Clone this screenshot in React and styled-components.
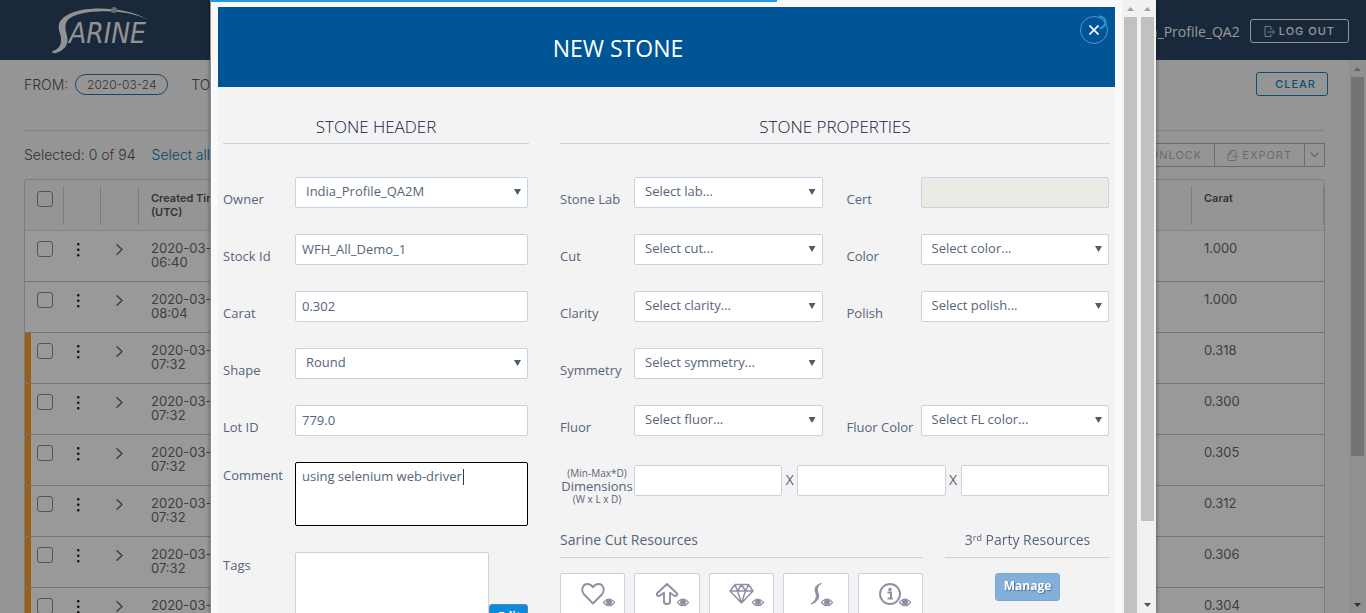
import React, { useId } from "react";
import styled, { createGlobalStyle } from "styled-components";

const GlobalStyle = createGlobalStyle`
  *, *::before, *::after { box-sizing: border-box; }
  html, body, #root { height: 100%; }
  body { margin: 0; overflow: hidden; background: #f9f9f9; }
  button, input, select, textarea { font: inherit; color: inherit; margin: 0; }
`;

const pageFont = `Inter, "Liberation Sans", sans-serif`;
const formFont = `"Open Sans", "Noto Sans", sans-serif`;

/* ---------- page behind the dialog ---------- */

const Page = styled.div`
  height: 100%;
  display: flex;
  flex-direction: column;
  font-family: ${pageFont};
  font-weight: 300;
  color: #565656;
`;

const TopBar = styled.header`
  flex: none;
  height: 60px;
  padding: 0 17px 0 48px;
  display: flex;
  align-items: center;
  justify-content: space-between;
  background: #2a4462;
  color: #fafafa;
`;

const Account = styled.div`
  display: flex;
  align-items: center;
  gap: 10px;
  padding-top: 2px;
  font-weight: 400;
`;

const UserName = styled.span`
  font-family: ${formFont};
  font-size: 14px;
`;

const OutlineButton = styled.button`
  display: inline-flex;
  align-items: center;
  justify-content: center;
  gap: 4px;
  height: 24px;
  padding: ${(p) => p.$pad || "0 12px"};
  border: 1px solid ${(p) => p.$tone};
  border-radius: 3px;
  background: transparent;
  color: ${(p) => p.$tone};
  font-size: 11px;
  font-weight: ${(p) => p.$weight || 500};
  letter-spacing: 1px;
  white-space: nowrap;
`;

const Scroller = styled.div`
  flex: 1;
  min-height: 0;
  display: flex;
`;

const Main = styled.main`
  flex: 1;
  min-width: 0;
  overflow: hidden;
  padding: 12px 24px 0;
`;

const FilterBar = styled.div`
  display: flex;
  align-items: flex-start;
  height: 59px;
  margin-right: 1px;
  border-bottom: 1px solid #dcdcdc;
  font-size: 14px;
`;

const DateField = styled.label`
  display: flex;
  align-items: center;
  gap: 7px;
  height: 24px;
  margin-right: 23px;
`;

const DatePill = styled.input`
  width: 93px;
  height: 21px;
  padding: 0;
  border: 1px solid #2b6fa8;
  border-radius: 11px;
  background: transparent;
  text-align: center;
  font-size: 12px;
`;

const ClearSlot = styled.div`
  margin: 0 -4px 0 auto;
`;

const ListBar = styled.div`
  display: flex;
  align-items: center;
  justify-content: space-between;
  height: 48px;
  font-size: 14px;
`;

const Picked = styled.div`
  display: flex;
  gap: 16px;
  padding-bottom: 2px;
  a { color: #0b78b0; text-decoration: none; }
`;

const ToolGroup = styled.div`
  display: flex;
  button {
    border-radius: 0;
    margin-left: -1px;
  }
`;

const Grid = styled.table`
  width: 100%;
  table-layout: fixed;
  border-collapse: separate;
  border-spacing: 0;
  border: 1px solid #d0d0d0;
  border-radius: 3px 3px 0 0;
  font-size: 13px;
  line-height: 14px;
`;

const HeadCell = styled.th`
  height: 51px;
  padding: 6px 0 5px;
  vertical-align: top;
  text-align: left;
  border-bottom: 1px solid #dcdcdc;
  font-size: 11px;
  font-weight: 600;
`;

const HeadInner = styled.div`
  height: 39px;
  padding: 5px 0 0 12px;
  border-right: 1px solid #d0d0d0;
`;

const Cell = styled.td`
  height: 51px;
  padding: 10px 0 0 ${(p) => p.$indent || 12}px;
  vertical-align: top;
  background: #ffffff;
  border-bottom: 1px solid #c4c4c4;
  box-shadow: ${(p) => (p.$flag ? "inset 6px 0 #ff9d28" : "none")};
  font-weight: 400;
  color: #6a6a6a;
`;

const Tick = styled.input`
  appearance: none;
  display: block;
  width: 16px;
  height: 16px;
  border: 1px solid #8c8c8c;
  border-radius: 3px;
`;

const IconButton = styled.button`
  display: flex;
  align-items: center;
  height: 16px;
  padding: 0;
  border: 0;
  background: transparent;
`;

/* ---------- scroll bars ---------- */

const Track = styled.div`
  flex: none;
  width: 17px;
  display: flex;
  flex-direction: column;
  align-items: center;
  justify-content: space-between;
  background: #f1f1f1;
`;

const Arrow = styled.span`
  flex: none;
  width: 7px;
  height: 4px;
  margin: 7px 0 6px;
  background: ${(p) => (p.$down ? "#505050" : "#a3a3a3")};
  clip-path: ${(p) =>
    p.$down ? "polygon(0 0, 100% 0, 50% 100%)" : "polygon(50% 0, 100% 100%, 0 100%)"};
`;

const Lane = styled.div`
  flex: 1;
  width: 13px;
`;

const Thumb = styled.div`
  height: ${(p) => p.$size};
  background: #c1c1c1;
`;

function ScrollBar({ size, down = true }) {
  return (
    <Track aria-hidden="true">
      <Arrow />
      <Lane>
        <Thumb $size={size} />
      </Lane>
      {down && <Arrow $down />}
    </Track>
  );
}

/* ---------- dialog ---------- */

const Backdrop = styled.div`
  position: fixed;
  inset: 0;
  display: flex;
  justify-content: center;
  padding: 0 210px;
  background: rgba(0, 0, 0, 0.4);
`;

const Dialog = styled.section`
  flex: 1;
  min-width: 0;
  display: flex;
  overflow: hidden;
  border-left: 1px solid #8f8f8f;
  background: #f9f9f9;
  box-shadow: 0 0 4px rgba(0, 0, 0, 0.5);
  font-family: ${formFont};
  font-size: 13px;
  line-height: 18px;
  color: #566579;
`;

const Progress = styled.div`
  position: absolute;
  top: 0;
  left: 211px;
  right: 211px;
  height: 2px;
  &::before {
    content: "";
    display: block;
    width: 60%;
    height: 2px;
    background: #2199e0;
  }
`;

const Sheet = styled.div`
  flex: 1;
  min-width: 0;
  margin: 7px 7px 0;
  background: #f3f3f3;
`;

const TitleBar = styled.header`
  display: grid;
  grid-template-columns: 1fr 97px;
  height: 80px;
  background: #005596;
  color: #ffffff;
`;

const Title = styled.h1`
  margin: 0;
  padding-top: 2px;
  align-self: center;
  text-align: center;
  font-size: 23px;
  line-height: 30px;
  font-weight: 400;
`;

const CloseButton = styled.button`
  position: relative;
  justify-self: end;
  display: flex;
  align-items: center;
  justify-content: center;
  width: 28px;
  height: 28px;
  margin: 9px 7px 0 0;
  padding: 0;
  border: 1px solid #5c93c0;
  border-radius: 50%;
  background: transparent;
`;

const Spinner = styled.svg`
  position: absolute;
  top: -2px;
  right: 0;
`;

const Columns = styled.div`
  display: grid;
  grid-template-columns: 306fr 550fr;
  gap: 31px;
  padding: 27px 5px 0;
`;

const Heading = styled.h2`
  margin: 0 0 33px;
  padding-bottom: 4px;
  border-bottom: 1px solid #c6d3e0;
  text-align: center;
  font-size: 17px;
  line-height: 25px;
  font-weight: 300;
  color: #14183f;
`;

const Fields = styled.div`
  display: grid;
  grid-template-columns: ${(p) => (p.$pair ? "1fr 1fr" : "1fr")};
  gap: 26px 24px;
  padding-right: 1px;
`;

const Field = styled.div`
  display: grid;
  grid-template-columns: ${(p) => p.$label || 74}px 1fr;
  grid-column: ${(p) => (p.$wide ? "1 / -1" : "auto")};
`;

const Label = styled.label`
  padding-top: ${(p) => (p.$top ? 5 : 14)}px;
  line-height: 17px;
  white-space: nowrap;
`;

const TextBox = styled.input`
  width: 100%;
  min-width: 0;
  height: 31px;
  padding: 0 6px 2px;
  border: 1px solid #c6d3e0;
  border-radius: 2px;
  outline: 0;
  background: ${(p) => (p.disabled ? "#ebebe4" : "#ffffff")};
`;

const SelectWrap = styled.div`
  display: grid;
  align-items: center;
  & > * { grid-area: 1 / 1; }
  &::after {
    content: "";
    grid-area: 1 / 1;
    justify-self: end;
    width: 7px;
    height: 6px;
    margin: 0 7px 1px 0;
    background: #4c5b6f;
    clip-path: polygon(0 0, 100% 0, 50% 100%);
    pointer-events: none;
  }
`;

const Picker = styled.select`
  appearance: none;
  width: 100%;
  height: 31px;
  padding: 0 18px 4px 10px;
  border: 1px solid #c6d3e0;
  border-radius: 2px;
  background: #ffffff;
`;

const CommentWrap = styled.div`
  position: relative;
`;

const Caret = styled.span`
  position: absolute;
  top: 7px;
  left: 168px;
  width: 1px;
  height: 16px;
  background: #2c3a4c;
`;

const Comment = styled.textarea`
  display: block;
  width: 100%;
  height: 64px;
  padding: 4px 6px;
  border: 1px solid #000000;
  border-radius: 2px;
  outline: 0;
  resize: none;
  background: #ffffff;
`;

const TagRow = styled.div`
  display: grid;
  grid-template-columns: 1fr 39px;
  align-items: end;
`;

const TagBox = styled(Comment)`
  height: 80px;
  border-color: #c6d3e0;
`;

const SolidButton = styled.button`
  height: 28px;
  padding: 0 8px 2px;
  border: 1px solid ${(p) => (p.$pale ? "#7aa6d0" : "#5d86a8")};
  border-radius: 3px;
  background: ${(p) => (p.$pale ? "#82b0d9" : "#0b8bdd")};
  color: #ffffff;
  font-size: 12px;
  line-height: 16px;
  font-weight: 700;
  text-shadow: 1px 1px 1px rgba(0, 0, 0, 0.35);
`;

const DimLabel = styled.div`
  padding-top: 2px;
  text-align: center;
  line-height: 14px;
  white-space: nowrap;
  small {
    display: block;
    font-size: 10px;
    line-height: 12px;
  }
`;

const DimRow = styled.div`
  display: grid;
  grid-template-columns: 1fr 15px 1fr 15px 1fr;
  align-items: center;
  height: 31px;
  text-align: center;
`;

const Times = styled.span`
  padding-bottom: 2px;
  font-size: 14px;
`;

const DimField = styled(Field)`
  margin-top: 3px;
`;

const Resources = styled.div`
  display: grid;
  grid-template-columns: 363fr 165fr;
  gap: 22px;
  margin-top: 24px;
`;

const SubHeading = styled.h3`
  margin: 0 0 15px;
  padding-bottom: 6px;
  border-bottom: 1px solid #c6d3e0;
  text-align: ${(p) => (p.$center ? "center" : "left")};
  font-size: 14px;
  line-height: 22px;
  font-weight: 400;
  sup { font-size: 9px; line-height: 0; vertical-align: 4px; }
`;

const Tiles = styled.div`
  display: grid;
  grid-template-columns: repeat(5, 1fr);
  gap: 9px;
`;

const Tile = styled.button`
  height: 64px;
  padding: 8px 0 0 12px;
  border: 1px solid #c6d3e0;
  border-radius: 2px;
  background: #ffffff;
  color: #8d90a5;
  display: flex;
  justify-content: center;
  align-items: flex-start;
`;

const Centered = styled.div`
  display: flex;
  justify-content: center;
`;

/* ---------- drawings ---------- */

function Logo() {
  return (
    <svg width="104" height="50" viewBox="48 5 104 50" role="img" aria-label="Sarine">
      <path
        d="M149 20 C134 11 114 8 96 8.500 C77 9 62 15 59 24 C57.500 31 62 35 61 42 C60 47 57 50 52.500 51 C51.500 53 53 53.500 56 53 C63 51 67.500 46 67.500 40 C67.500 34 64 29 66 23 C69 15.500 82 12 98 11.500 C117 10.500 133 13 149 20Z"
        fill="#f4f4f4"
      />
      <circle cx="114" cy="10" r="3" fill="#b4b4b4" />
      <text
        x="69"
        y="43"
        fill="#f4f4f4"
        fontFamily="'Liberation Sans Narrow', 'DejaVu Sans Condensed', sans-serif"
        fontStyle="italic"
        fontWeight="400"
        fontSize="28"
      >
        ARINE
      </text>
    </svg>
  );
}

const line = { fill: "none", stroke: "currentColor", strokeLinecap: "round", strokeLinejoin: "round" };

function DoorIcon() {
  return (
    <svg width="11" height="11" viewBox="0 0 11 11" {...line} strokeWidth="1" opacity="0.75">
      <path d="M7 3.5V1L6.5.5H1v10h6V8.5M4 6h6.3M8.5 4.2L10.4 6 8.5 7.8" />
    </svg>
  );
}

function ExportIcon() {
  return (
    <svg width="11" height="11" viewBox="0 0 11 11" {...line} strokeWidth="1">
      <path d="M1 4v5.5q0 1 1 1h6q1 0 1-1V9M1 4L4 .5h4q1 0 1 1v2M1 4h3V.5M5 6.3h5.3M8.6 4.5l1.8 1.8-1.8 1.8" />
    </svg>
  );
}

function Dots() {
  return (
    <svg width="4" height="16" viewBox="0 0 4 16" fill="#222222">
      <rect x="1" y="2" width="2.5" height="2.5" rx="1" />
      <rect x="1" y="7.5" width="2.5" height="2.5" rx="1" />
      <rect x="1" y="13" width="2.5" height="2.5" rx="1" />
    </svg>
  );
}

function Chevron({ down }) {
  return (
    <svg width={down ? 9 : 7} height={down ? 6 : 11} viewBox={down ? "0 0 9 6" : "0 0 7 11"} {...line} strokeWidth="1.5">
      <path d={down ? "M1 1l3.5 3.5L8 1" : "M1 .8l5 4.7-5 4.7"} />
    </svg>
  );
}

const shapes = {
  heart: (
    <path
      d="M12 21.500L2.700 12C0 8.500 1.300 2 6.500 2c2.800 0 4.400 1.500 5.500 3.200C13.100 3.500 14.700 2 17.500 2c5.200 0 6.500 6.500 3.800 10z"
      strokeWidth="1.900"
    />
  ),
  arrow: (
    <path
      d="M12 2l9.600 9c1.600 1.800-.8 3.900-2.700 2.500L15 10.700V20q0 2-3 2t-3-2v-9.300l-3.900 2.800C3.200 14.900.8 12.800 2.400 11z"
      strokeWidth="1.900"
    />
  ),
  gem: <path d="M6 2.500h13.500l4.500 6.500-11.500 12L1 9zM1 9h23M6 2.500L8.500 9l4 12 4-12 3-6.500M8.500 9l4-6.500 4 6.500" strokeWidth="1.500" />,
  scurve: (
    <path
      d="M17 1.500c-7 2-6.500 6.500-5 10 1.400 3.800-1 8-5 10.500 7-2 8.600-6.500 7.200-10.500C13 8 12.500 4.500 17 1.500z"
      fill="currentColor"
      strokeWidth="1"
    />
  ),
  info: (
    <>
      <circle cx="12" cy="12" r="10" strokeWidth="1.900" />
      <circle cx="12" cy="7.500" r="1.700" fill="currentColor" stroke="none" />
      <path d="M9.500 10.500H13V16.500H14.800M9.500 16.500H13" strokeWidth="2" strokeLinecap="butt" strokeLinejoin="miter" />
    </>
  ),
};

const eyeShift = { heart: -1, arrow: -1, gem: 0, scurve: -6, info: -2 };

function ResourceIcon({ name }) {
  return (
    <svg width="36" height="27" viewBox="0 0 36 27" {...line}>
      {shapes[name]}
      <g transform={`translate(${eyeShift[name]} 0)`}>
        <ellipse cx="29" cy="20.500" rx="6.500" ry="4.800" fill="#ffffff" stroke="none" />
        <path d="M23.400 20.500Q29 13.500 34.600 20.500Q29 27 23.400 20.500z" strokeWidth="1.200" />
        <circle cx="29" cy="20" r="3" fill="currentColor" stroke="none" />
      </g>
    </svg>
  );
}

/* ---------- form parts ---------- */

function InputField({ label, value = "", labelWidth, disabled }) {
  const id = useId();
  return (
    <Field $label={labelWidth}>
      <Label htmlFor={id}>{label}</Label>
      <TextBox id={id} defaultValue={value} disabled={disabled} />
    </Field>
  );
}

function SelectField({ label, value, labelWidth }) {
  const id = useId();
  return (
    <Field $label={labelWidth}>
      <Label htmlFor={id}>{label}</Label>
      <SelectWrap>
        <Picker id={id}>
          <option>{value}</option>
        </Picker>
      </SelectWrap>
    </Field>
  );
}

const rows = [
  { time: "06:40", carat: "1.000" },
  { time: "08:04", carat: "1.000" },
  { time: "07:32", carat: "0.318", flag: true },
  { time: "07:32", carat: "0.300", flag: true },
  { time: "07:32", carat: "0.305", flag: true },
  { time: "07:32", carat: "0.312", flag: true },
  { time: "07:32", carat: "0.306", flag: true },
  { time: "07:32", carat: "0.304", flag: true },
];

function StoneTable() {
  return (
    <Grid>
      <colgroup>
        <col style={{ width: 39 }} />
        <col style={{ width: 37 }} />
        <col style={{ width: 38 }} />
        <col />
        <col style={{ width: 132 }} />
      </colgroup>
      <thead>
        <tr>
          <HeadCell><HeadInner><Tick type="checkbox" aria-label="Select all rows" /></HeadInner></HeadCell>
          <HeadCell><HeadInner /></HeadCell>
          <HeadCell><HeadInner /></HeadCell>
          <HeadCell><HeadInner>Created Time<br />(UTC)</HeadInner></HeadCell>
          <HeadCell><HeadInner>Carat</HeadInner></HeadCell>
        </tr>
      </thead>
      <tbody>
        {rows.map((row, i) => (
          <tr key={i}>
            <Cell $flag={row.flag}><Tick type="checkbox" aria-label={`Select row ${i + 1}`} /></Cell>
            <Cell><IconButton aria-label="Row menu"><Dots /></IconButton></Cell>
            <Cell $indent={15}><IconButton aria-label="Expand row"><Chevron /></IconButton></Cell>
            <Cell>2020-03-24<br />{row.time}</Cell>
            <Cell>{row.carat}</Cell>
          </tr>
        ))}
      </tbody>
    </Grid>
  );
}

function NewStoneDialog() {
  const commentId = useId();
  const tagsId = useId();
  return (
    <Dialog role="dialog" aria-label="New stone">
      <Progress />
      <Sheet>
        <TitleBar>
          <Title>NEW STONE</Title>
          <CloseButton aria-label="Close">
            <svg width="10" height="10" viewBox="0 0 10 10" stroke="#ffffff" strokeWidth="1.600">
              <path d="M.5.5l9 9M9.500.5l-9 9" />
            </svg>
            <Spinner width="9" height="15" viewBox="0 0 9 15" fill="none" stroke="#2199e0" strokeWidth="2">
              <path d="M1 1.500C5 1.500 8 4 7.500 8 7 11 5 12.500 1.500 13.500" />
            </Spinner>
          </CloseButton>
        </TitleBar>
        <Columns>
          <div>
            <Heading>STONE HEADER</Heading>
            <Fields>
              <SelectField label="Owner" value="India_Profile_QA2M" labelWidth={72} />
              <InputField label="Stock Id" value="WFH_All_Demo_1" labelWidth={72} />
              <InputField label="Carat" value="0.302" labelWidth={72} />
              <SelectField label="Shape" value="Round" labelWidth={72} />
              <InputField label="Lot ID" value="779.0" labelWidth={72} />
              <Field $label={72}>
                <Label $top htmlFor={commentId}>Comment</Label>
                <CommentWrap>
                  <Comment id={commentId} defaultValue="using selenium web-driver" spellCheck={false} />
                  <Caret />
                </CommentWrap>
              </Field>
              <Field $label={72}>
                <Label $top htmlFor={tagsId}>Tags</Label>
                <TagRow>
                  <TagBox id={tagsId} />
                  <SolidButton>Edit</SolidButton>
                </TagRow>
              </Field>
            </Fields>
          </div>
          <div>
            <Heading>STONE PROPERTIES</Heading>
            <Fields $pair>
              <SelectField label="Stone Lab" value="Select lab..." />
              <InputField label="Cert" disabled />
              <SelectField label="Cut" value="Select cut..." />
              <SelectField label="Color" value="Select color..." />
              <SelectField label="Clarity" value="Select clarity..." />
              <SelectField label="Polish" value="Select polish..." />
              <SelectField label="Symmetry" value="Select symmetry..." />
              <span />
              <SelectField label="Fluor" value="Select fluor..." />
              <SelectField label="Fluor Color" value="Select FL color..." />
              <DimField $wide>
                <DimLabel>
                  <small>(Min-Max*D)</small>
                  Dimensions
                  <small>(W x L x D)</small>
                </DimLabel>
                <DimRow>
                  <TextBox aria-label="Width" />
                  <Times>X</Times>
                  <TextBox aria-label="Length" />
                  <Times>X</Times>
                  <TextBox aria-label="Depth" />
                </DimRow>
              </DimField>
            </Fields>
            <Resources>
              <div>
                <SubHeading>Sarine Cut Resources</SubHeading>
                <Tiles>
                  {["heart", "arrow", "gem", "scurve", "info"].map((name) => (
                    <Tile key={name} aria-label={name}>
                      <ResourceIcon name={name} />
                    </Tile>
                  ))}
                </Tiles>
              </div>
              <div>
                <SubHeading $center>3<sup>rd</sup> Party Resources</SubHeading>
                <Centered>
                  <SolidButton $pale>Manage</SolidButton>
                </Centered>
              </div>
            </Resources>
          </div>
        </Columns>
      </Sheet>
      <ScrollBar size="100%" down={false} />
      <ScrollBar size="87%" />
    </Dialog>
  );
}

export default function App() {
  return (
    <>
      <GlobalStyle />
      <Page>
        <TopBar>
          <Logo />
          <Account>
            <UserName>India_Profile_QA2</UserName>
            <OutlineButton $tone="#fafafa" $pad="0 13px"><DoorIcon />LOG OUT</OutlineButton>
          </Account>
        </TopBar>
        <Scroller>
          <Main>
            <FilterBar>
              <DateField>FROM: <DatePill defaultValue="2020-03-24" /></DateField>
              <DateField>TO: <DatePill defaultValue="2020-03-31" /></DateField>
              <ClearSlot>
                <OutlineButton $tone="#1586bd" $pad="0 11px 0 18px">CLEAR</OutlineButton>
              </ClearSlot>
            </FilterBar>
            <ListBar>
              <Picked>
                <span>Selected: 0 of 94</span>
                <a href="#all">Select all</a>
              </Picked>
              <ToolGroup>
                <OutlineButton $tone="#b4b4b4" $weight={400}>UNLOCK</OutlineButton>
                <OutlineButton $tone="#b4b4b4" $weight={400}><ExportIcon />EXPORT</OutlineButton>
                <OutlineButton $tone="#b4b4b4" $pad="0 5px" aria-label="Export options"><Chevron down /></OutlineButton>
              </ToolGroup>
            </ListBar>
            <StoneTable />
          </Main>
          <ScrollBar size="73%" />
        </Scroller>
      </Page>
      <Backdrop>
        <NewStoneDialog />
      </Backdrop>
    </>
  );
}
